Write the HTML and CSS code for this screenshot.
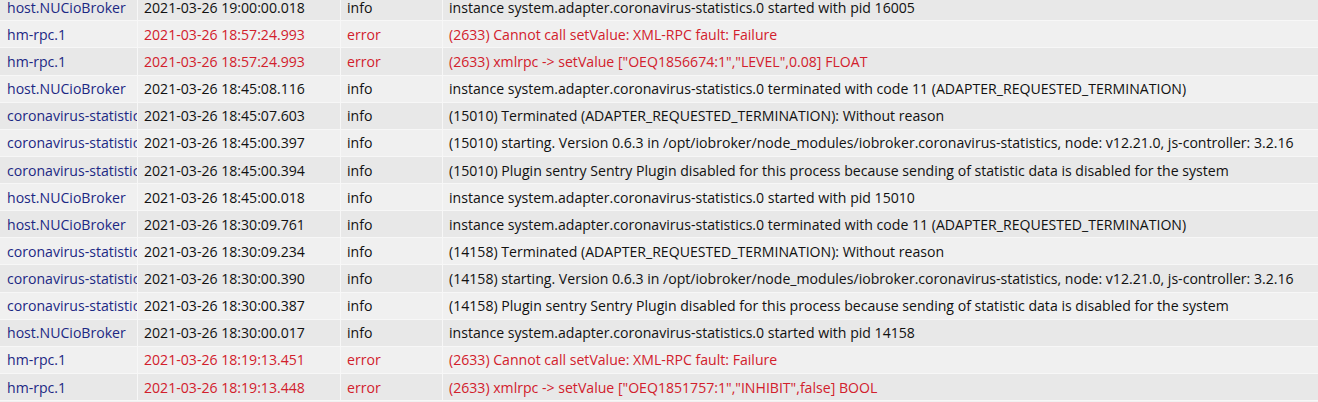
FILE: index.html
```html
<!DOCTYPE html>
<html>
<head>
<meta charset="utf-8">
<link rel="stylesheet" href="styles.css">
</head>
<body>
<div class="log">
  <div class="row"><div class="src">host.NUCioBroker</div><div class="cell">2021-03-26 19:00:00.018</div><div class="cell">info</div><div class="cell">instance system.adapter.coronavirus-statistics.0 started with pid 16005</div></div>
  <div class="row err"><div class="src">hm-rpc.1</div><div class="cell">2021-03-26 18:57:24.993</div><div class="cell">error</div><div class="cell">(2633) Cannot call setValue: XML-RPC fault: Failure</div></div>
  <div class="row err"><div class="src">hm-rpc.1</div><div class="cell">2021-03-26 18:57:24.993</div><div class="cell">error</div><div class="cell">(2633) xmlrpc -&gt; setValue ["OEQ1856674:1","LEVEL",0.08] FLOAT</div></div>
  <div class="row"><div class="src">host.NUCioBroker</div><div class="cell">2021-03-26 18:45:08.116</div><div class="cell">info</div><div class="cell">instance system.adapter.coronavirus-statistics.0 terminated with code 11 (ADAPTER_REQUESTED_TERMINATION)</div></div>
  <div class="row"><div class="src">coronavirus-statistics.0</div><div class="cell">2021-03-26 18:45:07.603</div><div class="cell">info</div><div class="cell">(15010) Terminated (ADAPTER_REQUESTED_TERMINATION): Without reason</div></div>
  <div class="row"><div class="src">coronavirus-statistics.0</div><div class="cell">2021-03-26 18:45:00.397</div><div class="cell">info</div><div class="cell">(15010) starting. Version 0.6.3 in /opt/iobroker/node_modules/iobroker.coronavirus-statistics, node: v12.21.0, js-controller: 3.2.16</div></div>
  <div class="row"><div class="src">coronavirus-statistics.0</div><div class="cell">2021-03-26 18:45:00.394</div><div class="cell">info</div><div class="cell">(15010) Plugin sentry Sentry Plugin disabled for this process because sending of statistic data is disabled for the system</div></div>
  <div class="row"><div class="src">host.NUCioBroker</div><div class="cell">2021-03-26 18:45:00.018</div><div class="cell">info</div><div class="cell">instance system.adapter.coronavirus-statistics.0 started with pid 15010</div></div>
  <div class="row"><div class="src">host.NUCioBroker</div><div class="cell">2021-03-26 18:30:09.761</div><div class="cell">info</div><div class="cell">instance system.adapter.coronavirus-statistics.0 terminated with code 11 (ADAPTER_REQUESTED_TERMINATION)</div></div>
  <div class="row"><div class="src">coronavirus-statistics.0</div><div class="cell">2021-03-26 18:30:09.234</div><div class="cell">info</div><div class="cell">(14158) Terminated (ADAPTER_REQUESTED_TERMINATION): Without reason</div></div>
  <div class="row"><div class="src">coronavirus-statistics.0</div><div class="cell">2021-03-26 18:30:00.390</div><div class="cell">info</div><div class="cell">(14158) starting. Version 0.6.3 in /opt/iobroker/node_modules/iobroker.coronavirus-statistics, node: v12.21.0, js-controller: 3.2.16</div></div>
  <div class="row"><div class="src">coronavirus-statistics.0</div><div class="cell">2021-03-26 18:30:00.387</div><div class="cell">info</div><div class="cell">(14158) Plugin sentry Sentry Plugin disabled for this process because sending of statistic data is disabled for the system</div></div>
  <div class="row"><div class="src">host.NUCioBroker</div><div class="cell">2021-03-26 18:30:00.017</div><div class="cell">info</div><div class="cell">instance system.adapter.coronavirus-statistics.0 started with pid 14158</div></div>
  <div class="row err"><div class="src">hm-rpc.1</div><div class="cell">2021-03-26 18:19:13.451</div><div class="cell">error</div><div class="cell">(2633) Cannot call setValue: XML-RPC fault: Failure</div></div>
  <div class="row err"><div class="src">hm-rpc.1</div><div class="cell">2021-03-26 18:19:13.448</div><div class="cell">error</div><div class="cell">(2633) xmlrpc -&gt; setValue ["OEQ1851757:1","INHIBIT",false] BOOL</div></div>
</div>
</body>
</html>
```
FILE: styles.css
```css
html, body {
  margin: 0;
  padding: 0;
  background: #f0f0f0;
  overflow: hidden;
}
.log {
  margin-top: -5.8px;
  font-family: "Open Sans", "Noto Sans", sans-serif;
  font-size: 14.1px;
  color: #111;
}
.row {
  display: grid;
  grid-template-columns: 137px 203px 102px 1fr;
  height: 27.14px;
  box-sizing: border-box;
  border-bottom: 1.5px solid #f7f7f7;
  background: #e8e8e8;
}
.row:nth-child(even) {
  background: #f0f0f0;
}
.src, .cell {
  display: flex;
  align-items: center;
  padding-left: 6px;
  white-space: nowrap;
  overflow: hidden;
  border-left: 1px solid #f7f7f7;
}
.src {
  color: #1c2884;
  border-left: none;
  padding-left: 7px;
}
.row.err .cell {
  color: #d2202c;
}
```
